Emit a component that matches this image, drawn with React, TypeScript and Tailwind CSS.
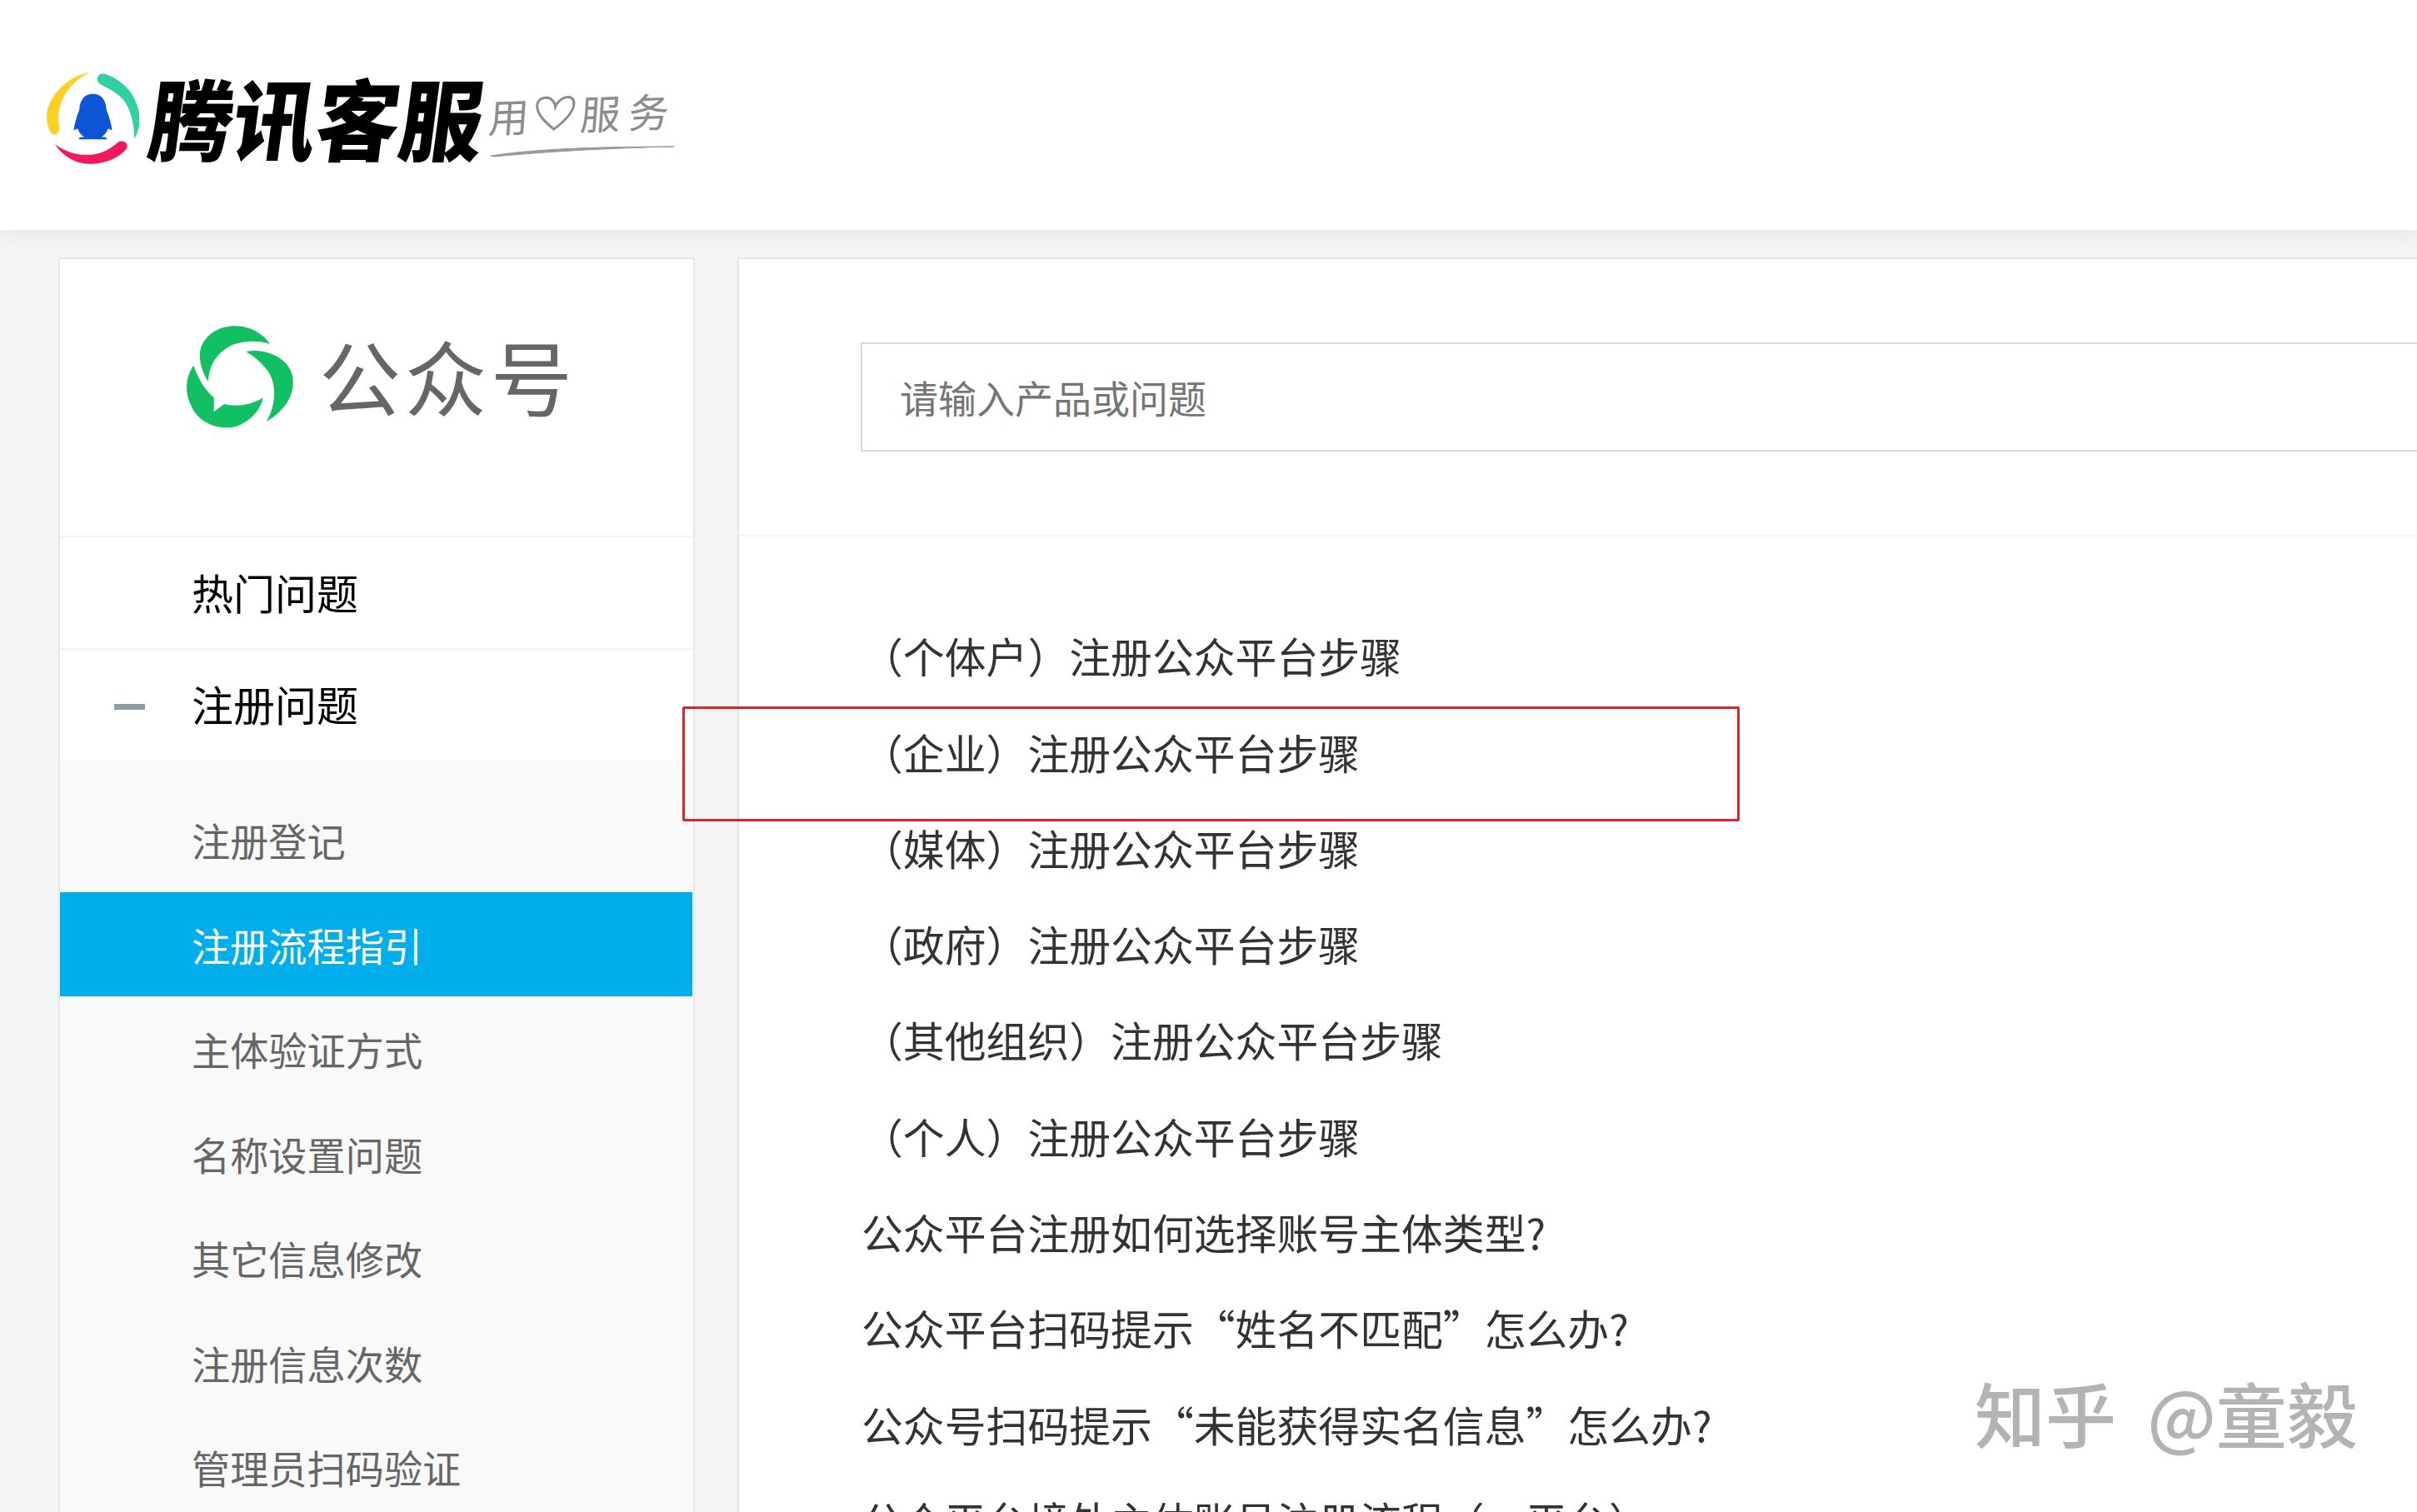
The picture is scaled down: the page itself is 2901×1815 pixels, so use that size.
const CJK = "font-['Noto_Sans_CJK_SC','Noto_Sans',sans-serif]";

const subMenu = [
  "注册登记",
  "注册流程指引",
  "主体验证方式",
  "名称设置问题",
  "其它信息修改",
  "注册信息次数",
  "管理员扫码验证",
];

const questions = [
  "（个体户）注册公众平台步骤",
  "（企业）注册公众平台步骤",
  "（媒体）注册公众平台步骤",
  "（政府）注册公众平台步骤",
  "（其他组织）注册公众平台步骤",
  "（个人）注册公众平台步骤",
  "公众平台注册如何选择账号主体类型?",
  "公众平台扫码提示“姓名不匹配”怎么办?",
  "公众号扫码提示“未能获得实名信息”怎么办?",
  "公众平台境外主体账号注册流程（xx平台）",
];

function TencentLogo() {
  return (
    <svg width="111" height="112" viewBox="78 50 334 336" className="mt-[8px] shrink-0">
      <path
        fill="#fdd023"
        d="M235 52C170 62 100 115 80 190C75 225 82 255 95 272C105 282 125 275 125 250C118 225 118 190 135 150C155 105 195 70 235 52Z"
      />
      <path
        fill="#2fd0a6"
        d="M262 70C268 56 280 54 295 60C340 75 400 120 412 200C418 240 405 275 395 292C395 250 385 200 365 165C340 125 300 112 275 97C264 90 258 80 262 70Z"
      />
      <path
        fill="#f0195c"
        d="M108 312C140 360 190 385 240 383C290 382 340 360 365 330C378 310 355 292 335 305C300 335 270 350 220 350C180 350 140 335 108 312Z"
      />
      <path
        fill="#0b55d6"
        d="M245 130C215 130 198 150 196 188C185 215 178 240 176 262L190 255C195 270 205 280 214 285C200 286 194 288 194 294L296 294C296 288 290 286 276 285C285 280 295 270 300 255L314 262C312 240 305 215 294 188C292 150 275 130 245 130Z"
      />
    </svg>
  );
}

function WechatLogo() {
  return (
    <svg width="132" height="125" viewBox="70 60 392 372" className="shrink-0">
      <g fill="#12bf62">
        <path d="M370 128C330 70 265 60 225 65C160 72 115 125 120 175C122 210 135 240 150 262C150 200 190 150 240 130C280 115 335 115 370 128Z" />
        <path d="M285 155C340 145 410 165 440 215C470 270 450 350 358 405C395 340 395 260 355 215C335 190 310 170 285 155Z" />
        <path d="M97 205C110 240 130 285 170 320L170 370L207 343C250 355 310 345 345 320C340 360 300 410 240 425C180 435 110 410 85 340C65 295 70 245 97 205Z" />
      </g>
    </svg>
  );
}

function Header() {
  return (
    <header className="relative z-10 flex h-[276px] items-center bg-white pl-[56px] shadow-[0_4px_24px_rgba(0,0,0,0.06)]">
      <TencentLogo />
      <span className="ml-[14px] mt-[2px] -skew-x-[8deg] scale-y-[1.06] whitespace-nowrap text-[100px] leading-none font-black text-black">
        腾讯客服
      </span>
      <div className="relative ml-[6px] mt-[-6px] flex h-[80px] w-[224px] items-center">
        <div className="flex -rotate-2 -skew-x-6 items-center gap-[6px] text-[48px] leading-none text-[#8c8c8c]">
          <span>用</span>
          <svg width="50" height="44" viewBox="0 0 50 44" className="shrink-0">
            <path
              d="M25 41C14 32 3 22 3 12C3 5 9 2 15 3C20 4 24 9 25 14C27 8 33 3 39 3C45 3 48 8 47 14C45 24 36 33 25 41Z"
              fill="none"
              stroke="#8c8c8c"
              strokeWidth="3"
            />
          </svg>
          <span>服</span>
          <span className="ml-[4px]">务</span>
        </div>
        <svg width="224" height="16" viewBox="0 0 224 16" className="absolute bottom-[-14px] left-0">
          <path d="M2 14C60 5 140 3 222 3C140 5 70 9 6 15Z" fill="#9a9a9a" stroke="#9a9a9a" strokeWidth="1" />
        </svg>
      </div>
    </header>
  );
}

function Sidebar() {
  return (
    <aside className="ml-[70px] w-[764px] shrink-0 border-x-2 border-t-2 border-[#e6e6e6] bg-white">
      {/* Logo */}
      <div className="flex h-[332px] items-start pl-[151px] pt-[79px]">
        <WechatLogo />
        <span className="ml-[28px] mt-[9px] text-[98px] leading-[100px] tracking-[5px] text-[#666]">公众号</span>
      </div>

      {/* Top level */}
      <div className="flex h-[135px] items-center border-t-2 border-[#f4f4f4] pb-[3px] pl-[158px] text-[50px] text-black">
        热门问题
      </div>
      <div className="flex h-[134px] items-center border-t-2 border-[#f4f4f4] pb-[3px] pl-[65px] text-[50px] text-black">
        <span className="mr-[56px] mt-[7px] h-[7px] w-[37px] bg-[#8f9bab]" />
        注册问题
      </div>

      {/* Sub menu */}
      <div className="bg-[#f9f9fa] pt-[33px]">
        {subMenu.map((item, i) => (
          <div
            key={item}
            className={`mr-[1px] flex h-[125.5px] items-center pl-[158px] text-[46.2px] ${
              i === 1 ? "bg-[#00aeeb] text-white" : "text-[#666]"
            }`}
          >
            {item}
          </div>
        ))}
      </div>
    </aside>
  );
}

function MainPanel() {
  return (
    <main className="ml-[51px] min-w-0 flex-1 border-l-2 border-t-2 border-[#e6e6e6] bg-white">
      {/* Search */}
      <div className="border-b-2 border-[#f4f4f4] pb-[100px] pl-[146px] pt-[100px]">
        <div className="flex h-[131px] w-[2000px] items-center border-2 border-[#d9d9d9] pl-[45px] text-[46px] text-[#757575]">
          请输入产品或问题
        </div>
      </div>

      {/* Question list */}
      <ul className="pl-[147px] pt-[85px]">
        {questions.map((q) => (
          <li key={q} className="flex h-[115.3px] items-center text-[49.85px] whitespace-nowrap text-[#333]">
            {q}
          </li>
        ))}
      </ul>
    </main>
  );
}

export default function App() {
  return (
    <div className={`relative h-[1815px] w-[2901px] overflow-hidden bg-[#f4f4f4] ${CJK}`}>
      <Header />
      <div className="flex pt-[33px]">
        <Sidebar />
        <MainPanel />
      </div>

      {/* Red annotation box */}
      <div className="absolute left-[819px] top-[848px] h-[138px] w-[1269px] rounded-[2px] border-[3px] border-[#d9252b]" />

      {/* Watermark */}
      <div className="absolute left-[2370px] top-[1637px] whitespace-nowrap text-[85px] leading-[116px] font-medium text-[#b3b3b3] [word-spacing:18px]">
        知乎 @童毅
      </div>
    </div>
  );
}
